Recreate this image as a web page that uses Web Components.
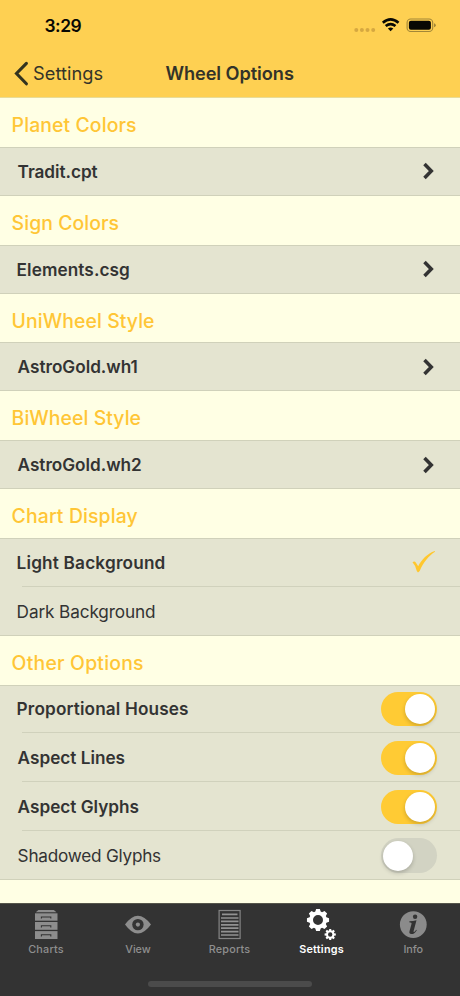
<!DOCTYPE html>
<html lang="en"><head><meta charset="utf-8"><title>Wheel Options</title>
<style>
html,body{margin:0;height:100%;background:#ffffe4}
body{font-family:Inter,"Liberation Sans",sans-serif;color:#333329;overflow:hidden}
</style></head><body>
<wheel-screen></wheel-screen>
<script>
const define=(name,html,setup)=>customElements.define(name,class extends HTMLElement{
  connectedCallback(){
    if(this.shadowRoot)return;
    this.attachShadow({mode:'open'}).innerHTML=html;
    if(setup)setup.call(this,this.shadowRoot);
  }
});
const ctx=document.createElement('canvas').getContext('2d');

// One line of text, tracked so that its ink spans the width in "w".
define('fit-text',`<style>:host{display:block;white-space:pre}span{display:block}</style><span><slot></slot></span>`,function(r){
  const c=getComputedStyle(this),t=this.textContent;
  ctx.font=`${c.fontWeight} ${c.fontSize} Inter`;
  const m=ctx.measureText(t),ink=m.actualBoundingBoxRight+m.actualBoundingBoxLeft;
  const s=r.querySelector('span');
  s.style.letterSpacing=(this.getAttribute('w')-ink)/(t.length-1)+'px';
  s.style.marginLeft=m.actualBoundingBoxLeft+'px';
  this.style.width=this.getAttribute('w')+'px';
});

define('status-bar',`<style>
:host{display:flex;height:50px;box-sizing:border-box;padding:0 24px 0 44.5px;align-items:center;justify-content:space-between;color:#080804}
fit-text{font-size:17.4px;font-weight:600;line-height:20px;padding-top:1px}svg{display:block}
</style><fit-text w="37">3:29</fit-text>
<svg width="84" height="20" viewBox="352 15 84 20">
<g fill="#d6a840"><circle cx="356.3" cy="30" r="2"/><circle cx="361.9" cy="30" r="2"/><circle cx="367.5" cy="30" r="2"/><circle cx="373.2" cy="30" r="2"/></g>
<g fill="none" stroke="#080804" stroke-width="2.6"><path d="M382.8 22.8Q390.6 16 398.5 22.8"/><path d="M385.7 26.1Q390.6 22 395.5 26.1"/></g><path fill="#080804" d="M387.9 28.5Q390.6 26.6 393.3 28.5L390.6 31.3Z"/>
<rect x="407.1" y="19" width="25.6" height="12.5" rx="3.6" fill="none" stroke="#a28637" stroke-width="1.1"/><rect x="408.9" y="20.8" width="22" height="9" rx="2" fill="#080804"/><path d="M434 23.2Q435.8 23.7 435.8 25.2T434 27.2Z" fill="#a28637"/>
</svg>`);

define('nav-bar',`<style>
:host{display:grid;grid-template-columns:34px 131.4px 1fr;height:48px;align-items:center;font-size:18.2px;line-height:22px}
svg{display:block}fit-text{padding-bottom:2px}
</style><svg width="34" height="30" viewBox="0 59 34 30"><path d="M26.4 63.3L16.5 73.5L26.4 83.8" fill="none" stroke="#33331f" stroke-width="3.1" stroke-linecap="round"/></svg>
<fit-text w="68.5">Settings</fit-text><fit-text w="128.5" style="font-weight:600">Wheel Options</fit-text>`);

define('section-head',`<style>
:host{display:flex;height:48.88px;box-sizing:border-box;align-items:center;padding:5px 0 0 12.6px;color:#ffc636;font-size:19.4px;font-weight:550;line-height:24px}
</style><slot></slot>`);

define('option-group',`<style>:host{display:block;background:#e4e4d0;box-shadow:inset 0 1px #d0d1ba,inset 0 -1px #d0d1ba}</style><slot></slot>`);

define('option-row',`<style>
:host{display:flex;position:relative;height:48.88px;box-sizing:border-box;align-items:center;justify-content:space-between;padding:0 22.7px 0 17.6px;font-size:17.2px;font-weight:600;line-height:22px;color:#333}
:host([plain]){font-weight:400}
:host([divided])::after{content:"";position:absolute;left:22px;right:0;bottom:0;height:1px;background:#d0d1bc}
::slotted(fit-text){padding-top:.8px}
</style><slot></slot><slot name="end"></slot>`);

define('row-chevron',`<style>:host{display:block;width:17px}svg{display:block}</style>
<svg width="17" height="20" viewBox="0 0 17 20"><path d="M4.5 3L11.3 10L4.5 17" fill="none" stroke="#333" stroke-width="3.5"/></svg>`);

define('check-mark',`<style>:host{display:block;width:25px}svg{display:block}</style>
<svg width="24" height="24" viewBox="413 551 24 24"><path fill="#ffc72e" d="M413.5 563.2Q415.5 561.9 416.8 563.4L419.2 567.2C422.5 561 428.5 554.2 435.8 552L436 552.8C430 556.5 424 564 420.7 572L419 573.4L417.8 572Q416.5 566.2 413.5 563.2Z"/></svg>`);

define('toggle-switch',`<style>
:host{display:flex;width:56.5px;height:34.5px;box-sizing:border-box;padding:2.2px;border-radius:18px;background:#d2d3c3}
i{width:30px;height:30px;border-radius:50%;background:#fff;box-shadow:0 2px 4px #0003}
:host([on]){background:#ffcb34;justify-content:flex-end}
</style><i></i>`);

define('tab-item',`<style>
:host{display:flex;flex-direction:column;align-items:center;flex:1;color:#8f8f8f;font-size:10.8px;font-weight:500;line-height:14px}
:host([active]){color:#fff;font-weight:600}
::slotted(svg){display:block;width:36px;height:36px}
:host([nudge]) ::slotted(fit-text){margin-left:-1px}
</style><slot></slot>`);

const cog=(cx,cy,r,ro,ri,n,tw)=>{
  let d='';const p=(a,q)=>(cx+q*Math.cos(a)).toFixed(2)+' '+(cy+q*Math.sin(a)).toFixed(2);
  for(let i=0;i<n;i++){const a=-Math.PI/2+i*2*Math.PI/n;
    d+=(i?'L':'M')+p(a-tw*1.35,r)+'L'+p(a-tw*.72,ro)+'L'+p(a+tw*.72,ro)+'L'+p(a+tw*1.35,r);}
  return d+`ZM${cx-ri} ${cy}a${ri} ${ri} 0 1 0 ${2*ri} 0a${ri} ${ri} 0 1 0 ${-2*ri} 0Z`;
};

define('tab-bar',`<style>
:host{display:flex;position:relative;height:93px;box-sizing:border-box;padding-top:3px;background:#333;border-top:1px solid #55554a}
.home{position:absolute;left:148px;top:76.5px;width:164px;height:6px;border-radius:3px;background:#4b4b4b}
</style>
<tab-item><svg viewBox="28 907 36 36"><path fill="#8d8d8d" d="M38.4 910H53.8L56.5 912.2H35.8Z"/><g fill="#8d8d8d"><path d="M35 913.3H57.5V920.7H35Z"/><path d="M35 922H57.5V929.8H35Z"/><path d="M35 931.1H57.5V939H35Z"/></g><path fill="none" stroke="#333" stroke-width="1.1" d="M41.4 918.6V917H50.8V918.6M41.4 927.5V925.8H50.8V927.5M41.4 936.5V934.8H50.8V936.5"/></svg><fit-text w="35.5">Charts</fit-text></tab-item>
<tab-item><svg viewBox="120 907 36 36"><path fill="#8d8d8d" d="M125 924.6Q137.8 907 151 924.6Q137.8 942.5 125 924.6Z"/><circle cx="137.9" cy="924.6" r="5.7" fill="#333"/><circle cx="137.9" cy="924.6" r="2.1" fill="#8d8d8d"/></svg><fit-text w="25.5">View</fit-text></tab-item>
<tab-item nudge><svg viewBox="212 907 36 36"><rect x="219.1" y="910.5" width="21" height="28" fill="none" stroke="#858585" stroke-width="1.2"/><path stroke="#929292" stroke-width="1.7" d="M222 914.3H237.5M221 918H238.5M221 921.4H238.5M221 924.8H238.5M221 928.2H238.5M221 931.6H238.5M221 935H238.5"/></svg><fit-text w="41.5">Reports</fit-text></tab-item>
<tab-item active nudge><svg viewBox="304 907 36 36"><path fill="#fff" fill-rule="evenodd" d="${cog(318,920,8.8,11.2,5,8,.23)}"/><path fill="#fff" fill-rule="evenodd" d="${cog(330.2,934.5,4.1,5.7,2.2,8,.23)}"/></svg><fit-text w="44.5">Settings</fit-text></tab-item>
<tab-item nudge><svg viewBox="396 907 36 36"><circle cx="413.3" cy="924.6" r="13.4" fill="#8b8b8b"/><circle cx="415.1" cy="916.8" r="2.2" fill="#333"/><path fill="#333" d="M409.4 921.3Q413.2 921.1 416.5 920.2L413.7 930.7Q413.3 932.2 414.1 932Q415 931.5 416.2 929.8L416.8 930.2Q414.2 934.3 411.3 934.1Q408.8 933.8 409.5 931.2L411.5 923.9Q412 922.2 409.3 922.2Z"/></svg><fit-text w="20">Info</fit-text></tab-item>
<div class="home"></div>`);

const row=(t,w,end='',attrs='')=>`<option-row ${attrs}><fit-text w="${w}">${t}</fit-text>${end}</option-row>`;
const head=(t,w)=>`<section-head><fit-text w="${w}">${t}</fit-text></section-head>`;
const file=(h,hw,t,w)=>head(h,hw)+`<option-group>${row(t,w,'<row-chevron slot="end"></row-chevron>')}</option-group>`;
const sw=on=>`<toggle-switch slot="end" ${on?'on':''}></toggle-switch>`;
define('wheel-screen',`<style>
:host{display:flex;flex-direction:column;width:460px;height:996px;background:#ffffe4}
header{background:#fed052;height:98.1px;border-bottom:1px solid #e8dc98;box-sizing:border-box;flex:none}
main{flex:1;min-height:0}tab-bar{flex:none}
</style><header><status-bar></status-bar><nav-bar></nav-bar></header>
<main>
${file('Planet Colors',123.5,'Tradit.cpt',80)}
${file('Sign Colors',106,'Elements.csg',111.5)}
${file('UniWheel Style',141.5,'AstroGold.wh1',120)}
${file('BiWheel Style',128,'AstroGold.wh2',123.5)}
${head('Chart Display',125)}<option-group>${row('Light Background',147,'<check-mark slot="end"></check-mark>','divided')}${row('Dark Background',137.5,'','plain')}</option-group>
${head('Other Options',130.5)}<option-group>${row('Proportional Houses',170.5,sw(1),'divided')}${row('Aspect Lines',107,sw(1),'divided')}${row('Aspect Glyphs',121,sw(1),'divided')}${row('Shadowed Glyphs',143.5,sw(0),'plain')}</option-group>
</main><tab-bar></tab-bar>`);
</script></body></html>
